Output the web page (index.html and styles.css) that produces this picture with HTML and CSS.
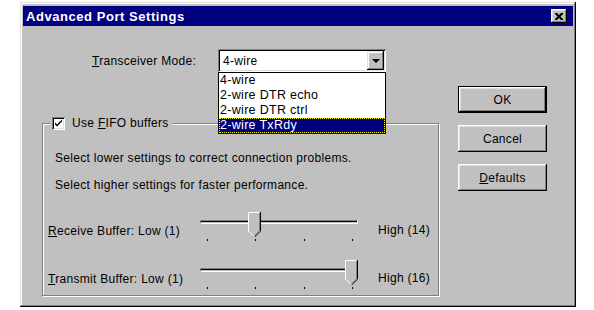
FILE: index.html
```html
<!DOCTYPE html>
<html lang="en">
<head>
    <meta charset="UTF-8">
    <title>Advanced Port Settings</title>
    <link rel="stylesheet" href="styles.css">
</head>
<body>
    <div class="window">
        <div class="titlebar">
            <span class="title">Advanced Port Settings</span>
            <span class="close-btn">
                <svg width="8" height="7" viewBox="0 0 8 7">
                    <path d="M0 0h2l2 2l2-2h2v1l-2.5 2.5L8 6v1H6L4 5L2 7H0V6l2.5-2.5L0 1z" fill="#000"/>
                </svg>
            </span>
        </div>

        <div class="dialog-body">
            <div class="left-col">
                <div class="mode-row">
                    <label class="mode-label"><u>T</u>ransceiver Mode:</label>
                    <div class="combo">
                        <div class="combo-box">
                            <span class="combo-value">4-wire</span>
                            <span class="combo-arrow"><span class="tri"></span></span>
                        </div>
                        <ul class="combo-list">
                            <li>4-wire</li>
                            <li>2-wire DTR echo</li>
                            <li>2-wire DTR ctrl</li>
                            <li class="selected"><span>2-wire TxRdy</span></li>
                        </ul>
                    </div>
                </div>

                <fieldset class="group">
                    <legend class="group-legend">
                        <span class="checkbox">
                            <svg width="9" height="9" viewBox="0 0 9 9">
                                <path d="M1 3.5l2 2l5-5v2l-5 5l-2-2z" fill="#000"/>
                            </svg>
                        </span>
                        <span>Use <u>F</u>IFO buffers</span>
                    </legend>

                    <p class="hint first">Select lower settings to correct connection problems.</p>
                    <p class="hint">Select higher settings for faster performance.</p>

                    <div class="slider-row">
                        <span class="slider-label"><u>R</u>eceive Buffer: Low (1)</span>
                        <div class="slider">
                            <div class="track"></div>
                            <span class="thumb" style="left: 48px;">
                                <svg width="13" height="25" viewBox="0 0 13 25">
                                    <polygon points="0,0 12,0 12,19 6,25 0,19" fill="#c0c0c0"/>
                                    <path d="M0.5 19V0.5H11.5" stroke="#fff" fill="none"/>
                                    <path d="M0.5 19L6 24.5" stroke="#fff" fill="none"/>
                                    <path d="M12.5 0V19.2L6.5 25" stroke="#000" fill="none"/>
                                    <path d="M11.5 1V18.8L6.5 23.8" stroke="#808080" fill="none"/>
                                </svg>
                            </span>
                            <div class="ticks"><i></i><i></i><i></i><i></i></div>
                        </div>
                        <span class="slider-high">High (14)</span>
                    </div>

                    <div class="slider-row">
                        <span class="slider-label"><u>T</u>ransmit Buffer: Low (1)</span>
                        <div class="slider">
                            <div class="track"></div>
                            <span class="thumb" style="left: 145px;">
                                <svg width="13" height="25" viewBox="0 0 13 25">
                                    <polygon points="0,0 12,0 12,19 6,25 0,19" fill="#c0c0c0"/>
                                    <path d="M0.5 19V0.5H11.5" stroke="#fff" fill="none"/>
                                    <path d="M0.5 19L6 24.5" stroke="#fff" fill="none"/>
                                    <path d="M12.5 0V19.2L6.5 25" stroke="#000" fill="none"/>
                                    <path d="M11.5 1V18.8L6.5 23.8" stroke="#808080" fill="none"/>
                                </svg>
                            </span>
                            <div class="ticks"><i></i><i></i><i></i><i></i></div>
                        </div>
                        <span class="slider-high">High (16)</span>
                    </div>
                </fieldset>
            </div>

            <div class="buttons">
                <button class="btn default">OK</button>
                <button class="btn">Cancel</button>
                <button class="btn"><u>D</u>efaults</button>
            </div>
        </div>
    </div>
</body>
</html>
```

FILE: styles.css
```css
body {
    margin: 0;
    background-color: #fff;
    font-family: "Liberation Sans", Arial, sans-serif;
    font-size: 12px;
    letter-spacing: 0.3px;
    color: #000;
}

.window {
    box-sizing: border-box;
    width: 556px;
    height: 305px;
    margin: 2px 0 0 20px;
    padding: 4px 3px 3px 3px;
    background-color: #c0c0c0;
    box-shadow: inset -1px -1px #000, inset 1px 1px #dfdfdf,
                inset -2px -2px #808080, inset 2px 2px #fff;
}

.titlebar {
    height: 20px;
    background-color: #000080;
    color: #fff;
    display: flex;
    align-items: center;
    justify-content: space-between;
    padding: 0 6px 0 3px;
}
.title {
    font-weight: bold;
    font-size: 13px;
    letter-spacing: 0.55px;
}
.close-btn {
    box-sizing: border-box;
    width: 16px;
    height: 14px;
    background-color: #c0c0c0;
    display: flex;
    align-items: center;
    justify-content: center;
    box-shadow: inset -1px -1px #000, inset 1px 1px #fff,
                inset -2px -2px #808080, inset 2px 2px #dfdfdf;
}

.dialog-body {
    display: grid;
    grid-template-columns: 417px 89px;
    column-gap: 18px;
}

.mode-row {
    display: flex;
    align-items: center;
    margin-top: 23px;
    padding-left: 69px;
    gap: 22px;
}
.combo {
    position: relative;
}
.combo-box {
    box-sizing: border-box;
    width: 168px;
    height: 23px;
    background-color: #fff;
    display: flex;
    align-items: center;
    justify-content: space-between;
    padding: 2px;
    box-shadow: inset 1px 1px #808080, inset -1px -1px #fff,
                inset 2px 2px #000, inset -2px -2px #dfdfdf;
}
.combo-value {
    padding-left: 3px;
}
.combo-arrow {
    box-sizing: border-box;
    width: 17px;
    height: 19px;
    background-color: #c0c0c0;
    display: flex;
    align-items: center;
    justify-content: center;
    box-shadow: inset -1px -1px #000, inset 1px 1px #dfdfdf,
                inset -2px -2px #808080, inset 2px 2px #fff;
}
.tri {
    width: 0;
    height: 0;
    border-left: 4px solid transparent;
    border-right: 4px solid transparent;
    border-top: 4px solid #000;
}
.combo-list {
    position: absolute;
    top: 23px;
    left: 0;
    width: 168px;
    box-sizing: border-box;
    margin: 0;
    padding: 0;
    list-style: none;
    background-color: #fff;
    border: 1px solid #000;
    z-index: 2;
    font-size: 12.5px;
}
.combo-list li {
    height: 15px;
    line-height: 15px;
    padding-left: 1px;
}
.combo-list li.selected {
    background-color: #000080;
    color: #fff;
    outline: 1px dotted #ffff00;
    outline-offset: -1px;
}

.group {
    box-sizing: border-box;
    width: 397px;
    height: 180px;
    margin: 44px 0 0 19px;
    padding: 0 0 0 5px;
    border: 1px solid #808080;
    box-shadow: 1px 1px 0 #fff, inset 1px 1px 0 #fff;
}
.group-legend {
    display: flex;
    align-items: center;
    gap: 7px;
    margin-left: 2px;
    padding: 0 4px 0 2px;
    background-color: #c0c0c0;
}
.checkbox {
    box-sizing: border-box;
    width: 13px;
    height: 13px;
    background-color: #fff;
    display: flex;
    align-items: center;
    justify-content: center;
    box-shadow: inset 1px 1px #808080, inset -1px -1px #fff,
                inset 2px 2px #000, inset -2px -2px #dfdfdf;
}

.hint {
    margin: 12px 0 0 7px;
    line-height: 15px;
}
.hint.first {
    margin-top: 21px;
}

.slider-row {
    display: flex;
    align-items: flex-start;
    margin-top: 19px;
}
.slider-row + .slider-row {
    margin-top: 18px;
}
.slider-label {
    width: 152px;
    padding-top: 12px;
    line-height: 15px;
}
.slider {
    position: relative;
    width: 158px;
    height: 30px;
}
.track {
    box-sizing: border-box;
    height: 4px;
    margin-top: 8px;
    border-top: 1px solid #808080;
    border-left: 1px solid #808080;
    border-bottom: 1px solid #fff;
    border-right: 1px solid #fff;
    box-shadow: inset 0 1px #000;
}
.thumb {
    position: absolute;
    top: 0;
    line-height: 0;
}
.ticks {
    display: flex;
    justify-content: space-between;
    padding: 0 5px 0 7px;
    margin-top: 15px;
}
.ticks i {
    width: 1px;
    height: 2px;
    background-color: #000;
}
.slider-high {
    margin-left: 20px;
    padding-top: 11px;
    line-height: 15px;
}

.buttons {
    display: flex;
    flex-direction: column;
    gap: 12px;
    margin-top: 60px;
}
.btn {
    box-sizing: border-box;
    width: 89px;
    height: 27px;
    padding: 0;
    border: none;
    background-color: #c0c0c0;
    font-family: "Liberation Sans", Arial, sans-serif;
    font-size: 12px;
    letter-spacing: 0.3px;
    color: #000;
    box-shadow: inset -1px -1px #000, inset 1px 1px #fff,
                inset -2px -2px #808080, inset 2px 2px #dfdfdf;
}
.btn.default {
    box-shadow: inset 0 0 0 1px #000, inset -2px -2px #000, inset 2px 2px #fff,
                inset -3px -3px #808080, inset 3px 3px #dfdfdf;
}
```
